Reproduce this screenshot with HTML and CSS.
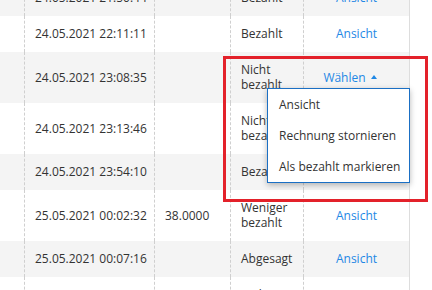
FILE: index.html
```html
<!DOCTYPE html>
<html lang="de">
<head>
<meta charset="utf-8">
<title>Rechnungen</title>
<link rel="stylesheet" href="styles.css">
</head>
<body>
<div class="page">
  <div class="table">
    <div class="row alt">
      <div class="cell"></div>
      <div class="cell">24.05.2021 21:50:44</div>
      <div class="cell"></div>
      <div class="cell">Bezahlt</div>
      <div class="cell action"><a class="link">Ansicht</a></div>
    </div>
    <div class="row">
      <div class="cell"></div>
      <div class="cell">24.05.2021 22:11:11</div>
      <div class="cell"></div>
      <div class="cell">Bezahlt</div>
      <div class="cell action"><a class="link">Ansicht</a></div>
    </div>
    <div class="row alt">
      <div class="cell"></div>
      <div class="cell">24.05.2021 23:08:35</div>
      <div class="cell"></div>
      <div class="cell">Nicht<br>bezahlt</div>
      <div class="cell action">
        <a class="link select">Wählen <span class="caret"></span></a>
        <ul class="menu">
          <li>Ansicht</li>
          <li>Rechnung stornieren</li>
          <li>Als bezahlt markieren</li>
        </ul>
      </div>
    </div>
    <div class="row">
      <div class="cell"></div>
      <div class="cell">24.05.2021 23:13:46</div>
      <div class="cell"></div>
      <div class="cell">Nicht<br>bezahlt</div>
      <div class="cell action"><a class="link">Ansicht</a></div>
    </div>
    <div class="row alt">
      <div class="cell"></div>
      <div class="cell">24.05.2021 23:54:10</div>
      <div class="cell"></div>
      <div class="cell">Bezahlt</div>
      <div class="cell action"><a class="link">Ansicht</a></div>
    </div>
    <div class="row">
      <div class="cell"></div>
      <div class="cell">25.05.2021 00:02:32</div>
      <div class="cell">38.0000</div>
      <div class="cell">Weniger<br>bezahlt</div>
      <div class="cell action"><a class="link">Ansicht</a></div>
    </div>
    <div class="row alt">
      <div class="cell"></div>
      <div class="cell">25.05.2021 00:07:16</div>
      <div class="cell"></div>
      <div class="cell">Abgesagt</div>
      <div class="cell action"><a class="link">Ansicht</a></div>
    </div>
    <div class="row">
      <div class="cell"></div>
      <div class="cell">25.05.2021 00:11:02</div>
      <div class="cell"></div>
      <div class="cell">Nicht<br>bezahlt</div>
      <div class="cell action"><a class="link">Wählen</a></div>
    </div>
  </div>
  <div class="highlight"></div>
</div>
</body>
</html>
```

FILE: styles.css
```css
html, body {
  margin: 0;
  padding: 0;
  background: #ffffff;
}
body {
  width: 432px;
  height: 290px;
  overflow: hidden;
  font-family: "Open Sans", "Liberation Sans", sans-serif;
  font-size: 12px;
  line-height: 15px;
  color: #333333;
}
.page {
  position: relative;
  width: 432px;
  height: 290px;
  overflow: hidden;
}
.table {
  margin-top: -20px;
  width: 410px;
}
.row {
  display: grid;
  grid-template-columns: 25px 130px 76px 73px 106px;
  background: #ffffff;
}
.row.alt {
  background: #f4f4f4;
}
.cell {
  box-sizing: border-box;
  padding: 10px 10px 11px 10px;
  border-right: 1px dashed #cfcfcf;
  display: flex;
  align-items: center;
  white-space: nowrap;
}
.cell:first-child {
  padding: 0;
}
.cell.action {
  position: relative;
  justify-content: center;
  border-right: 1px solid #dddddd;
}
.link {
  color: #1e88e5;
  text-decoration: none;
}
.select {
  display: flex;
  align-items: center;
  margin-right: 13px;
}
.caret {
  display: inline-block;
  width: 0;
  height: 0;
  margin-left: 5px;
  border-left: 3.5px solid transparent;
  border-right: 3.5px solid transparent;
  border-bottom: 4px solid #1e88e5;
}
.menu {
  position: absolute;
  top: 36px;
  right: -1px;
  width: 143px;
  box-sizing: border-box;
  margin: 0;
  padding: 0;
  list-style: none;
  background: #ffffff;
  border: 1px solid #1a6fc4;
  box-shadow: 0 2px 6px rgba(0, 0, 0, 0.28);
  z-index: 2;
}
.menu li {
  height: 31px;
  line-height: 31px;
  padding-left: 11px;
  color: #333333;
}
.highlight {
  position: absolute;
  left: 223px;
  top: 56px;
  width: 205px;
  height: 146px;
  box-sizing: border-box;
  border: 3px solid #e3212a;
  z-index: 3;
}
```
